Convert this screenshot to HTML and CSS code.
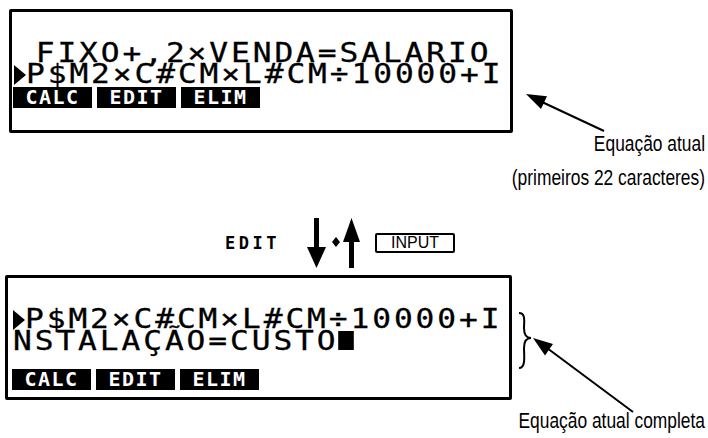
FILE: index.html
```html
<!DOCTYPE html>
<html lang="pt">
<head>
  <meta charset="UTF-8">
  <title>Equação atual</title>
  <link rel="stylesheet" href="styles.css">
</head>
<body>
  <div class="page">
    <div class="lcd lcd-first">
      <div class="lcd-line"> FIXO+,2×VENDA=SALARIO</div>
      <div class="lcd-line"><span class="ptr"></span>P$M2×C#CM×L#CM÷10000+I</div>
      <div class="menu">
        <span class="key">CALC</span>
        <span class="key">EDIT</span>
        <span class="key">ELIM</span>
      </div>
    </div>

    <div class="caption caption-top">
      <div class="caption-text">Equação atual</div>
      <div class="caption-text caption-sub">(primeiros 22 caracteres)</div>
    </div>

    <div class="step">
      <span class="step-label">EDIT</span>
      <svg class="step-arrows" width="56" height="52" viewBox="0 0 56 52">
        <rect x="9" y="1" width="5" height="31" fill="#000"/>
        <polygon points="2,30 21,30 11.5,51" fill="#000"/>
        <polygon points="31,20 35,25 31,30 27,25" fill="#000"/>
        <polygon points="38,25 55,25 46.5,1" fill="#000"/>
        <rect x="44" y="24" width="5" height="27" fill="#000"/>
      </svg>
      <span class="input-key">INPUT</span>
    </div>

    <div class="lcd lcd-second">
      <div class="lcd-line"><span class="ptr"></span>P$M2×C#CM×L#CM÷10000+I</div>
      <div class="lcd-line">NSTALAÇÃO=CUSTO<span class="cursor"></span></div>
      <div class="menu">
        <span class="key">CALC</span>
        <span class="key">EDIT</span>
        <span class="key">ELIM</span>
      </div>
    </div>

    <div class="caption caption-bottom">
      <div class="caption-text">Equação atual completa</div>
    </div>

    <!-- callout arrows and brace -->
    <svg class="callouts" width="708" height="438" viewBox="0 0 708 438">
      <line x1="604" y1="131" x2="542" y2="102" stroke="#000" stroke-width="2"/>
      <polygon points="526,94 547,96.3 541,109" fill="#000"/>
      <path d="M519,313 C526,313 524,322 524,328 C524,334 526,338 531,338 C526,338 524,342 524,348 C524,356 526,368 519,368" fill="none" stroke="#000" stroke-width="2"/>
      <line x1="633" y1="412" x2="547" y2="348" stroke="#000" stroke-width="2"/>
      <polygon points="533,338 553,344 545,355.5" fill="#000"/>
    </svg>
  </div>
</body>
</html>
```

FILE: styles.css
```css
body { margin: 0; background: #fff; color: #000; }
.page { position: relative; width: 708px; height: 438px; padding-top: 9px; box-sizing: border-box; font-family: "Liberation Sans", Arial, sans-serif; }

.lcd { box-sizing: border-box; border: 3px solid #000; border-radius: 2px; overflow: hidden; }
.lcd-first { margin-left: 9px; width: 504px; height: 124px; padding: 31px 0 0 2px; }
.lcd-second { margin: 6px 0 0 5px; width: 507px; height: 125px; padding: 31px 0 0 5px; }
.lcd-line { font-family: "DejaVu Sans Mono", monospace; font-size: 26px; line-height: 21px; height: 21px; letter-spacing: 2.43px; white-space: pre; -webkit-text-stroke: 0.3px #000; transform: scaleX(1.2); transform-origin: 0 0; }
.lcd-second .lcd-line + .lcd-line { margin-top: 1px; }
.ptr { display: inline-block; width: 0; height: 0; border-left: 10px solid #000; border-top: 10px solid transparent; border-bottom: 10px solid transparent; margin-right: 0; vertical-align: -2px; }
.cursor { display: inline-block; width: 13px; height: 19px; background: #000; vertical-align: 0; }

.menu { display: flex; gap: 5px; margin-top: 2px; }
.lcd-first .menu { margin-left: -1px; }
.lcd-second .menu { margin: 17px 0 0 -1px; }
.key { width: 79px; height: 21px; background: #000; color: #fff; font: bold 20px/21px "DejaVu Sans Mono", monospace; letter-spacing: 1.5px; text-align: center; }

.caption { text-align: right; padding-right: 3px; font-size: 22px; line-height: 21px; }
.caption-text { transform: scaleX(0.79); transform-origin: 100% 0; }
.caption-sub { margin-top: 13px; }
.caption-bottom { margin-top: 10px; }

.step { display: flex; align-items: center; height: 52px; margin-top: 29px; }
.step-label { margin-left: 225px; width: 80px; font: bold 17px "DejaVu Sans Mono", monospace; letter-spacing: 3.5px; }
.step-arrows { display: block; }
.input-key { margin-left: 14px; width: 80px; height: 20px; box-sizing: border-box; border: 2px solid #000; border-radius: 2px; font-size: 16px; line-height: 16px; text-align: center; }

.callouts { position: absolute; left: 0; top: 0; pointer-events: none; }
```
